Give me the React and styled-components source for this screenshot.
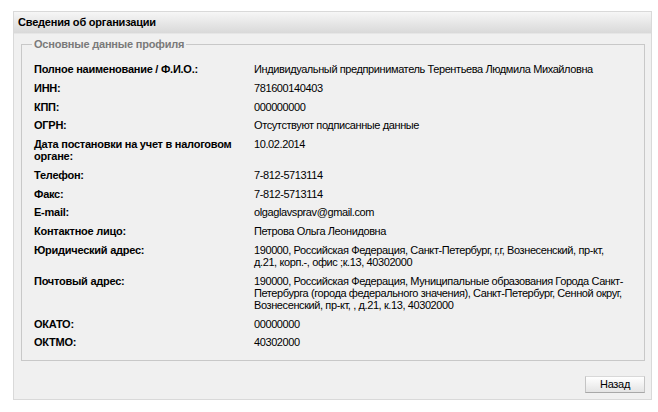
import React from "react";
import styled, { createGlobalStyle } from "styled-components";

const GlobalStyle = createGlobalStyle`
  html, body {
    margin: 0;
    padding: 0;
    background: #fff;
  }
  body {
    font-family: "Liberation Sans", Arial, sans-serif;
    font-size: 11px;
    color: #000;
  }
`;

const Page = styled.div`
  padding: 11px 6px 0 13px;
`;

const Panel = styled.div`
  border: 1px solid #d9d9d9;
  background: #f0f0f0;
`;

const PanelHeader = styled.div`
  height: 21px;
  line-height: 21px;
  padding-left: 4px;
  font-weight: bold;
  font-size: 11px;
  letter-spacing: -0.2px;
  background: linear-gradient(#f6f6f6, #d9d9d9);
  border-bottom: 1px solid #e6e6e6;
`;

const PanelBody = styled.div`
  padding: 4px 6px 6px 7px;
`;

const Fieldset = styled.fieldset`
  margin: 0;
  padding: 10px 12px 8px 12px;
  border: 1px solid #c8c8c8;
`;

const Legend = styled.legend`
  padding: 0 2px;
  margin-left: -2px;
  font-weight: bold;
  color: #7a7a7a;
  font-size: 11px;
  letter-spacing: -0.2px;
`;

const Table = styled.table`
  border-collapse: collapse;
  width: 100%;
  table-layout: fixed;
`;

const Label = styled.td`
  box-sizing: border-box;
  width: 220px;
  padding: 3.2px 8px 3.2px 0;
  font-weight: bold;
  letter-spacing: -0.25px;
  vertical-align: top;
  line-height: 12.3px;
`;

const Value = styled.td`
  padding: 3.2px 6px 3.2px 0;
  vertical-align: top;
  line-height: 12.3px;
  letter-spacing: -0.4px;
`;

const Footer = styled.div`
  display: flex;
  justify-content: flex-end;
  padding: 15px 0 0 0;
`;

const Button = styled.button`
  width: 60px;
  height: 17px;
  padding: 0;
  font-family: inherit;
  font-size: 11px;
  letter-spacing: -0.3px;
  color: #000;
  background: linear-gradient(#ffffff, #e4e4e4);
  border: 1px solid #c4c4c4;
  border-top-color: #d8d8d8;
  border-bottom-color: #a8a8a8;
`;

const rows = [
  ["Полное наименование / Ф.И.О.:", "Индивидуальный предприниматель Терентьева Людмила Михайловна"],
  ["ИНН:", "781600140403"],
  ["КПП:", "000000000"],
  ["ОГРН:", "Отсутствуют подписанные данные"],
  ["Дата постановки на учет в налоговом органе:", "10.02.2014"],
  ["Телефон:", "7-812-5713114"],
  ["Факс:", "7-812-5713114"],
  ["E-mail:", "olgaglavsprav@gmail.com"],
  ["Контактное лицо:", "Петрова Ольга Леонидовна"],
  ["Юридический адрес:", "190000, Российская Федерация, Санкт-Петербург, г,г, Вознесенский, пр-кт, д.21, корп.-, офис ;к.13, 40302000"],
  ["Почтовый адрес:", "190000, Российская Федерация, Муниципальные образования Города Санкт-Петербурга (города федерального значения), Санкт-Петербург, Сенной округ, Вознесенский, пр-кт, , д.21, к.13, 40302000"],
  ["ОКАТО:", "00000000"],
  ["ОКТМО:", "40302000"],
];

export default function App() {
  return (
    <Page>
      <GlobalStyle />
      <Panel>
        <PanelHeader>Сведения об организации</PanelHeader>
        <PanelBody>
          <Fieldset>
            <Legend>Основные данные профиля</Legend>
            <Table>
              <tbody>
                {rows.map(([label, value]) => (
                  <tr key={label}>
                    <Label>{label}</Label>
                    <Value>{value}</Value>
                  </tr>
                ))}
              </tbody>
            </Table>
          </Fieldset>
          <Footer>
            <Button>Назад</Button>
          </Footer>
        </PanelBody>
      </Panel>
    </Page>
  );
}
